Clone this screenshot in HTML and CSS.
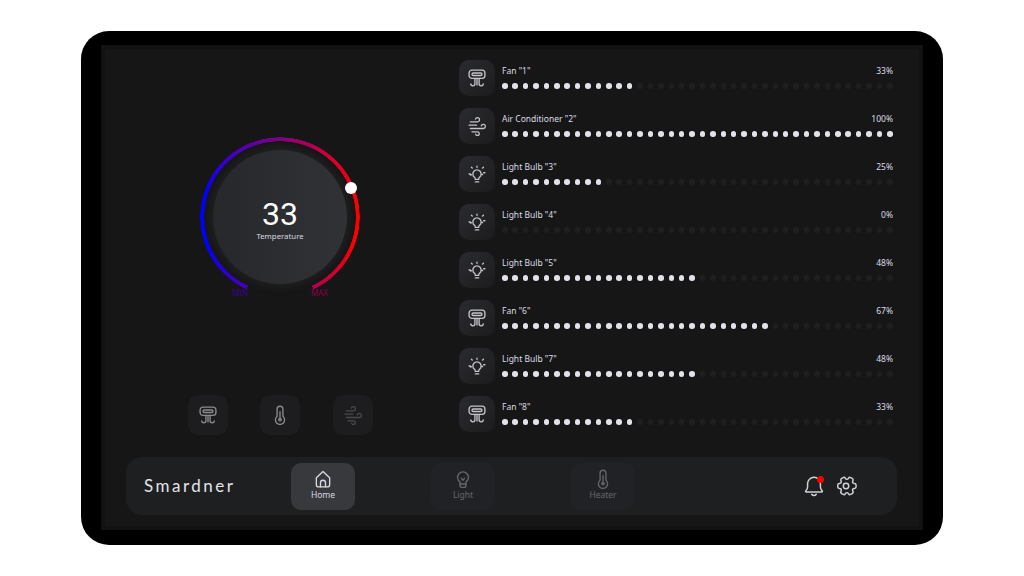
FILE: index.html
```html
<!DOCTYPE html>
<html lang="en">
<head>
  <meta charset="UTF-8">
  <meta name="viewport" content="width=device-width, initial-scale=1.0">
  <title>Smardner</title>
  <link rel="stylesheet" href="styles.css">
</head>
<body>
  <svg class="icon-defs" aria-hidden="true">
    <symbol id="i-fan" viewBox="0 0 24 24">
      <rect x="2.500" y="2.500" width="19" height="10" rx="3.500"/>
      <rect x="6" y="6" width="12" height="3" rx="1.500"/>
      <path d="M9.500 12.500v6.500a2.500 2.500 0 0 1-5 0"/>
      <path d="M12 12.500v8"/>
      <path d="M14.500 12.500v6.500a2.500 2.500 0 0 0 5 0"/>
    </symbol>
    <symbol id="i-wind" viewBox="0 0 24 24">
      <path d="M4 7h8.500a2.500 2.500 0 1 0-2.340-3.240"/>
      <path d="M2.500 11h9"/>
      <path d="M4 15h15.500a2.500 2.500 0 1 0-2.340-3.240"/>
      <path d="M6 19h6.500a2.200 2.200 0 1 1-2.100 2.800"/>
    </symbol>
    <symbol id="i-rays" viewBox="0 0 24 24">
      <path d="M2.500 12h1.500m8-9.500v1.500m8 6.500h1.500m-16.200-6.700l1 1m13.400-1l-1 1m-14.400 8.500l1-.6m12.400-.6l1 .6"/>
      <path d="M9 16a5 5 0 1 1 6 0a3.500 3.500 0 0 0-1 2.500h-4a3.500 3.500 0 0 0-1-2.500"/>
      <path d="M10 21.500h4"/>
    </symbol>
    <symbol id="i-bulb" viewBox="0 0 24 24">
      <path d="M8.500 15.500a6.500 6.500 0 1 1 7 0v5a1.500 1.500 0 0 1-1.500 1.500h-4a1.500 1.500 0 0 1-1.500-1.500z"/>
      <path d="M8.500 18h7"/>
      <path d="M10 11l2 2.500l2-2.500"/>
    </symbol>
    <symbol id="i-thermo" viewBox="0 0 24 24">
      <path d="M8.500 13.500v-8.500a3.500 3.500 0 0 1 7 0v8.500a5.500 5.500 0 1 1-7 0z"/>
      <path d="M12 8v9"/>
      <circle cx="12" cy="17.500" r="1.500"/>
    </symbol>
    <symbol id="i-home" viewBox="0 0 24 24">
      <path d="M4 10.500l8-7.500l8 7.500v8a3 3 0 0 1-3 3h-10a3 3 0 0 1-3-3z"/>
      <path d="M9 21.500v-5a3 3 0 0 1 6 0v5"/>
    </symbol>
    <symbol id="i-bell" viewBox="0 0 24 24">
      <path d="M12 2.500a7 7 0 0 1 7 7v3.500c0 1.800.8 3 2 4.500c.4.500.1 1-.5 1h-17c-.6 0-.9-.500-.5-1c1.200-1.500 2-2.700 2-4.500v-3.500a7 7 0 0 1 7-7z"/>
      <path d="M9.500 21a3 3 0 0 0 5 0"/>
    </symbol>
    <symbol id="i-gear" viewBox="0 0 24 24">
      <path d="M3 12.880v-1.760c0-1.040.85-1.900 1.900-1.900 1.810 0 2.550-1.280 1.640-2.850-.52-.9-.21-2.070.7-2.590l1.730-.99c.79-.47 1.810-.19 2.280.6l.11.19c.9 1.570 2.380 1.570 3.290 0l.11-.19c.47-.79 1.490-1.070 2.280-.6l1.730.99c.91.52 1.220 1.690.7 2.590-.91 1.570-.17 2.850 1.640 2.850 1.040 0 1.900.85 1.900 1.900v1.760c0 1.040-.85 1.900-1.900 1.900-1.810 0-2.550 1.280-1.640 2.850.52.91.21 2.070-.7 2.590l-1.730.99c-.79.47-1.810.19-2.280-.6l-.11-.19c-.9-1.570-2.380-1.570-3.290 0l-.11.19c-.47.79-1.490 1.070-2.280.6l-1.730-.99a1.900 1.900 0 0 1-.7-2.590c.91-1.570.17-2.850-1.640-2.850-1.050 0-1.900-.86-1.900-1.900z"/>
      <circle cx="12" cy="12" r="3"/>
    </symbol>
  </svg>

  <div class="device">
    <div class="screen">
      <div class="main">
        <section class="climate">
          <div class="gauge">
            <div class="gauge-ring"></div>
            <div class="gauge-disc">
              <div class="gauge-value">33</div>
              <div class="gauge-label">Temperature</div>
            </div>
            <span class="gauge-knob"></span>
            <span class="gauge-min">MIN</span>
            <span class="gauge-max">MAX</span>
          </div>
          <div class="quick-btns">
            <button class="quick-btn"><svg class="icon"><use href="#i-fan"/></svg></button>
            <button class="quick-btn"><svg class="icon"><use href="#i-thermo"/></svg></button>
            <button class="quick-btn quick-btn-dim"><svg class="icon"><use href="#i-wind"/></svg></button>
          </div>
        </section>
        <ul id="devices" class="device-list"></ul>
      </div>

      <nav class="navbar">
        <div class="logo">Smardner</div>
        <a class="nav-tab active"><svg class="icon"><use href="#i-home"/></svg>Home</a>
        <a class="nav-tab nav-tab-off"><svg class="icon"><use href="#i-bulb"/></svg>Light</a>
        <a class="nav-tab nav-tab-off"><svg class="icon"><use href="#i-thermo"/></svg>Heater</a>
        <div class="nav-actions">
          <div class="bell"><svg class="icon"><use href="#i-bell"/></svg><span class="bell-dot"></span></div>
          <svg class="icon gear"><use href="#i-gear"/></svg>
        </div>
      </nav>
    </div>
  </div>

  <script src="script.js"></script>
</body>
</html>
```

FILE: styles.css
```css
* {
  box-sizing: border-box;
}
body {
  font-family: 'Noto Sans', Arial, sans-serif;
  margin: 0;
  height: 576px;
  padding-top: 31px;
  background-color: #fff;
  overflow: hidden;
}
.icon-defs {
  display: none;
}
.icon {
  fill: none;
  stroke: currentColor;
  stroke-width: 1.6;
  stroke-linecap: round;
  stroke-linejoin: round;
}
.device {
  width: 862px;
  height: 514px;
  margin-left: 81px;
  padding: 14px 20px 15px;
  background: #000;
  border-radius: 28px;
}
.screen {
  height: 485px;
  display: flex;
  flex-direction: column;
  background: #161617;
  border: 4px solid #121213;
}
.main {
  display: grid;
  grid-template-columns: 350px 1fr;
  column-gap: 4px;
  padding: 11px 26px 0 0;
}
.climate {
  display: flex;
  flex-direction: column;
  align-items: center;
}
.gauge {
  position: relative;
  width: 160px;
  height: 160px;
  margin-top: 77px;
}
.gauge-ring {
  position: absolute;
  inset: 0;
  border-radius: 50%;
  background: conic-gradient(#800080 0deg, #d80030 42deg, #ff0000 80deg, #ff0000 112deg, #b00050 155deg, transparent 155deg, transparent 205deg, #4a00b8 205deg, #0000ff 250deg, #0000ff 285deg, #4000c8 320deg, #800080 360deg);
  -webkit-mask: radial-gradient(circle, transparent 75.500px, #000 76px, #000 79.500px, transparent 80px);
  mask: radial-gradient(circle, transparent 75.500px, #000 76px, #000 79.500px, transparent 80px);
}
.gauge-disc {
  position: absolute;
  inset: 13px;
  border-radius: 50%;
  display: flex;
  flex-direction: column;
  align-items: center;
  justify-content: center;
  background: linear-gradient(90deg, #27282b, #313236);
  box-shadow: 0 0 6px 4px #1f1f21;
  color: #fff;
}
.gauge-value {
  font-family: 'Roboto', 'Noto Sans', sans-serif;
  font-size: 32px;
  line-height: 24px;
  margin-top: 9px;
}
.gauge-label {
  font-size: 7.800px;
  line-height: 11px;
  margin-top: 5px;
  color: #d8d8e0;
}
.gauge-knob {
  position: absolute;
  left: 145px;
  top: 45px;
  width: 12px;
  height: 12px;
  border-radius: 50%;
  background: #fff;
}
.gauge-min,
.gauge-max {
  position: absolute;
  top: 151px;
  font-size: 8px;
  line-height: 10px;
}
.gauge-min {
  left: 32px;
  color: #3c0090;
}
.gauge-max {
  left: 111px;
  color: #8a0048;
}
.quick-btns {
  display: flex;
  gap: 32.500px;
  margin-top: 98px;
}
.quick-btn {
  width: 40px;
  height: 40px;
  padding: 0;
  display: flex;
  align-items: center;
  justify-content: center;
  border: none;
  border-radius: 10px;
  background: #1d1d20;
  color: #8c8c90;
}
.quick-btn .icon {
  width: 20px;
  height: 20px;
}
.quick-btn-dim {
  color: #4a4a4e;
}
.device-list {
  list-style-type: none;
  margin: 0;
  padding: 0;
  display: flex;
  flex-direction: column;
  gap: 12px;
}
.device-row {
  display: flex;
  gap: 7px;
  height: 36px;
}
.device-icon {
  flex: none;
  width: 36px;
  height: 36px;
  display: flex;
  align-items: center;
  justify-content: center;
  border-radius: 10px;
  background: linear-gradient(135deg, #2a2b2e, #1c1c1f);
  color: #c4c4c8;
}
.device-icon .icon {
  width: 20px;
  height: 20px;
}
.device-info {
  flex: 1;
  padding-top: 4px;
}
.device-text {
  display: flex;
  justify-content: space-between;
  font-size: 8.500px;
  line-height: 14px;
  color: #dcdce4;
}
.dots {
  display: flex;
  justify-content: space-between;
  margin-top: 5px;
}
.dot {
  width: 5.500px;
  height: 5.500px;
  border-radius: 50%;
  background: #1f1f22;
}
.dot.on {
  background: #e4e0ec;
}
.navbar {
  display: flex;
  align-items: center;
  height: 58px;
  margin: 22px 22px 0 21px;
  background: #1e1f21;
  border-radius: 16px;
}
.logo {
  width: 165px;
  padding: 0 0 2px 18px;
  font-family: 'Lato', sans-serif;
  font-size: 17px;
  letter-spacing: 2.500px;
  color: #e4e4ea;
}
.nav-tab {
  flex: none;
  width: 64px;
  height: 47px;
  padding-bottom: 2px;
  display: flex;
  flex-direction: column;
  align-items: center;
  justify-content: center;
  border-radius: 10px;
  background: #212225;
  color: #66666c;
  font-size: 8.500px;
  line-height: 12px;
}
.nav-tab .icon {
  width: 20px;
  height: 20px;
}
.nav-tab.active {
  background: #38393c;
  color: #d8d8e4;
}
.nav-tab-off {
  margin-left: 76px;
}
.nav-actions {
  display: flex;
  align-items: center;
  gap: 10px;
  margin-left: 168px;
  color: #d0d0d8;
}
.bell {
  position: relative;
  width: 22px;
  height: 22px;
}
.bell .icon {
  width: 22px;
  height: 22px;
}
.bell-dot {
  position: absolute;
  top: 1px;
  right: 1.500px;
  width: 7px;
  height: 7px;
  border-radius: 50%;
  background: #f00;
}
.gear {
  width: 22px;
  height: 22px;
}
```

FILE: script.js
```js
const devices = [
  { name: 'Fan "1"', icon: 'i-fan', value: 33 },
  { name: 'Air Conditioner "2"', icon: 'i-wind', value: 100 },
  { name: 'Light Bulb "3"', icon: 'i-rays', value: 25 },
  { name: 'Light Bulb "4"', icon: 'i-rays', value: 0 },
  { name: 'Light Bulb "5"', icon: 'i-rays', value: 48 },
  { name: 'Fan "6"', icon: 'i-fan', value: 67 },
  { name: 'Light Bulb "7"', icon: 'i-rays', value: 48 },
  { name: 'Fan "8"', icon: 'i-fan', value: 33 },
];
const DOT_COUNT = 38;

const list = document.getElementById('devices');

devices.forEach((d) => {
  const lit = Math.ceil(d.value / 100 * DOT_COUNT);
  let dots = '';
  for (let i = 0; i < DOT_COUNT; i++) {
    dots += `<span class="dot${i < lit ? ' on' : ''}"></span>`;
  }
  const row = document.createElement('li');
  row.className = 'device-row';
  row.innerHTML = `
    <div class="device-icon"><svg class="icon"><use href="#${d.icon}"/></svg></div>
    <div class="device-info">
      <div class="device-text"><span>${d.name}</span><span>${d.value}%</span></div>
      <div class="dots">${dots}</div>
    </div>`;
  list.appendChild(row);
});
```
